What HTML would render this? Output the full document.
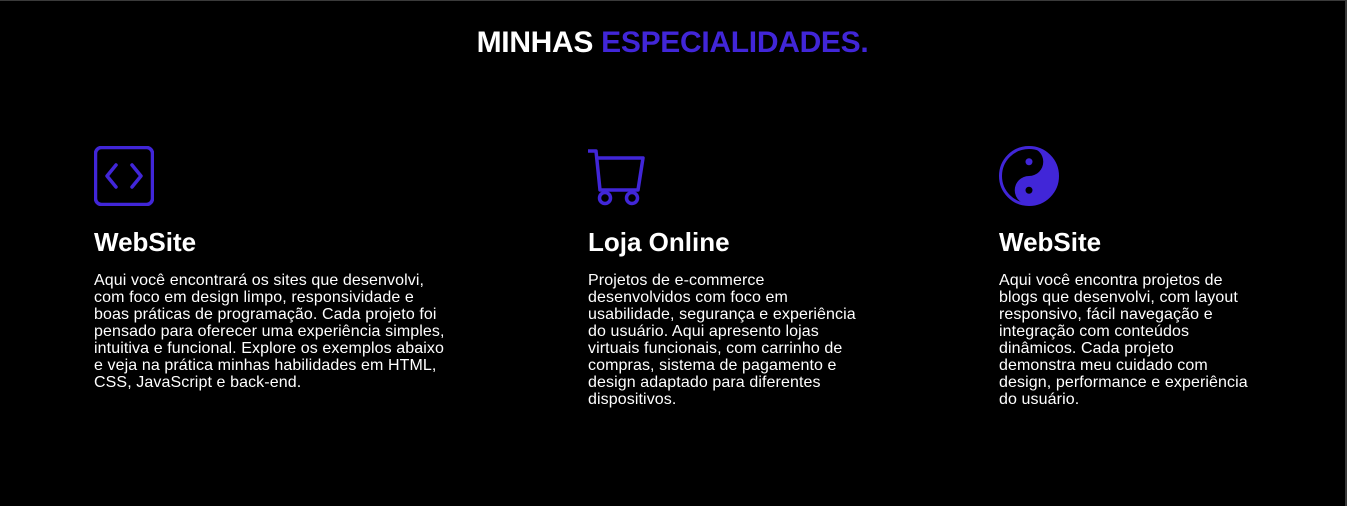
<!DOCTYPE html>
<html><head><meta charset="utf-8"><style>
html,body{margin:0;padding:0;background:#000;}
body{width:1347px;height:506px;position:relative;overflow:hidden;font-family:"Liberation Sans",sans-serif;color:#fff;box-sizing:border-box;border-top:1px solid #3a3a3a;border-right:2px solid #3a3a3a;}
h1{position:absolute;top:25px;left:0;width:1345px;text-align:center;margin:0;font-size:30px;font-weight:bold;letter-spacing:-0.3px;line-height:34px;}
h1 span{color:#4126d8;}
.col{position:absolute;top:145px;}
.col svg{display:block;}
h2{position:absolute;top:80px;margin:0;font-size:26px;font-weight:bold;white-space:nowrap;line-height:32px;}
p{position:absolute;top:126px;margin:0;font-size:16px;line-height:17px;white-space:nowrap;letter-spacing:0.1px;}
</style></head><body>
<h1>MINHAS <span>ESPECIALIDADES.</span></h1>

<div class="col" style="left:94px">
<svg width="60" height="60" viewBox="0 0 60 60"><rect x="1.5" y="1.5" width="57" height="57" rx="6" fill="none" stroke="#4126d8" stroke-width="3.5"/><path d="M22 19 L13 30 L22 41 M38 19 L47 30 L38 41" fill="none" stroke="#4126d8" stroke-width="3.5" stroke-linecap="round" stroke-linejoin="round"/></svg>
<h2>WebSite</h2>
<p>Aqui você encontrará os sites que desenvolvi,<br>com foco em design limpo, responsividade e<br>boas práticas de programação. Cada projeto foi<br>pensado para oferecer uma experiência simples,<br>intuitiva e funcional. Explore os exemplos abaixo<br>e veja na prática minhas habilidades em HTML,<br>CSS, JavaScript e back-end.</p>
</div>

<div class="col" style="left:588px">
<svg width="60" height="62" viewBox="0 0 60 62"><path d="M0 5 H8 L12 44 H50 L55 12 H10" fill="none" stroke="#4126d8" stroke-width="3.5" stroke-linejoin="round"/><circle cx="17" cy="52" r="5.5" fill="none" stroke="#4126d8" stroke-width="3.5"/><circle cx="44" cy="52" r="5.5" fill="none" stroke="#4126d8" stroke-width="3.5"/></svg>
<h2>Loja Online</h2>
<p>Projetos de e-commerce<br>desenvolvidos com foco em<br>usabilidade, segurança e experiência<br>do usuário. Aqui apresento lojas<br>virtuais funcionais, com carrinho de<br>compras, sistema de pagamento e<br>design adaptado para diferentes<br>dispositivos.</p>
</div>

<div class="col" style="left:999px">
<svg width="60" height="60" viewBox="0 0 60 60"><circle cx="30" cy="30" r="28.5" fill="none" stroke="#4126d8" stroke-width="3"/><path d="M30 1.5 A28.5 28.5 0 0 1 30 58.5 A14.25 14.25 0 0 1 30 30 A14.25 14.25 0 0 0 30 1.5Z" fill="#4126d8"/><circle cx="30" cy="15.75" r="3.5" fill="#4126d8"/><circle cx="30" cy="44.25" r="3.5" fill="#000"/></svg>
<h2>WebSite</h2>
<p>Aqui você encontra projetos de<br>blogs que desenvolvi, com layout<br>responsivo, fácil navegação e<br>integração com conteúdos<br>dinâmicos. Cada projeto<br>demonstra meu cuidado com<br>design, performance e experiência<br>do usuário.</p>
</div>
</body></html>
